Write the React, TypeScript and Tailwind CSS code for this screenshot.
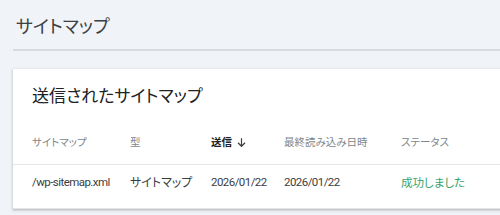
import React from 'react';

const jp = "font-['Noto_Sans_CJK_JP',sans-serif] [font-feature-settings:'palt']";
const latin = "font-['Roboto','Noto_Sans_CJK_JP',sans-serif] text-[11.5px] tracking-[-0.55px]";

const columns = [
  { id: 'sitemap', label: 'サイトマップ', width: 'w-[98px]' },
  { id: 'type', label: '型', width: 'w-[81px]' },
  { id: 'submitted', label: '送信', width: 'w-[73px]', sorted: true },
  { id: 'lastRead', label: '最終読み込み日時', width: 'w-[117px]' },
  { id: 'status', label: 'ステータス', width: 'w-[100px]' },
];

const rows = [
  {
    sitemap: '/wp-sitemap.xml',
    type: 'サイトマップ',
    submitted: '2026/01/22',
    lastRead: '2026/01/22',
    status: '成功しました',
  },
];

const ArrowDown = () => (
  <svg viewBox="0 0 24 24" className="h-[13px] w-[13px] ml-[3px]" fill="none" stroke="#3c4043" strokeWidth={2.2}>
    <path d="M12 4v15M5.5 12.5 12 19l6.5-6.5" />
  </svg>
);

export default function App() {
  return (
    <div className={`w-[500px] h-[215px] overflow-hidden bg-[#f0f3f8] pl-[13px] pt-[13px] ${jp}`}>
      <h1 className="ml-[3px] text-[18px] leading-[24px] text-[#3c4043]">サイトマップ</h1>
      <div className="mt-[12px] h-[2px] bg-[#d8dce1]" />

      <div className="mt-[18px] w-[520px] bg-white shadow-[0_1px_2px_rgba(60,64,67,0.25),0_1px_3px_1px_rgba(60,64,67,0.1)]">
        <h2 className="pl-[19px] pt-[14px] text-[17px] leading-[24px] text-[#202124]">送信されたサイトマップ</h2>

        {/* Header */}
        <div className="flex pl-[19px] pt-[28px] pb-[15px] border-b border-[#e6e6e6] text-[10.5px] leading-[14px]">
          {columns.map((col) => (
            <div
              key={col.id}
              className={`${col.width} shrink-0 flex items-center ${
                col.sorted ? 'font-bold text-[#202124]' : 'text-[#80868b]'
              }`}
            >
              {col.label}
              {col.sorted && <ArrowDown />}
            </div>
          ))}
        </div>

        {/* Rows */}
        {rows.map((row) => (
          <div key={row.sitemap} className="flex items-center pl-[19px] pt-[10px] pb-[19px] border-b border-[#e6e6e6] text-[12px] leading-[14px] text-[#3c4043]">
            <div className={`w-[98px] shrink-0 ${latin}`}>{row.sitemap}</div>
            <div className="w-[81px] shrink-0">{row.type}</div>
            <div className={`w-[73px] shrink-0 ${latin}`}>{row.submitted}</div>
            <div className={`w-[117px] shrink-0 ${latin}`}>{row.lastRead}</div>
            <div className="w-[100px] shrink-0 text-[11.5px] text-[#34a368]">{row.status}</div>
          </div>
        ))}
      </div>
    </div>
  );
}
